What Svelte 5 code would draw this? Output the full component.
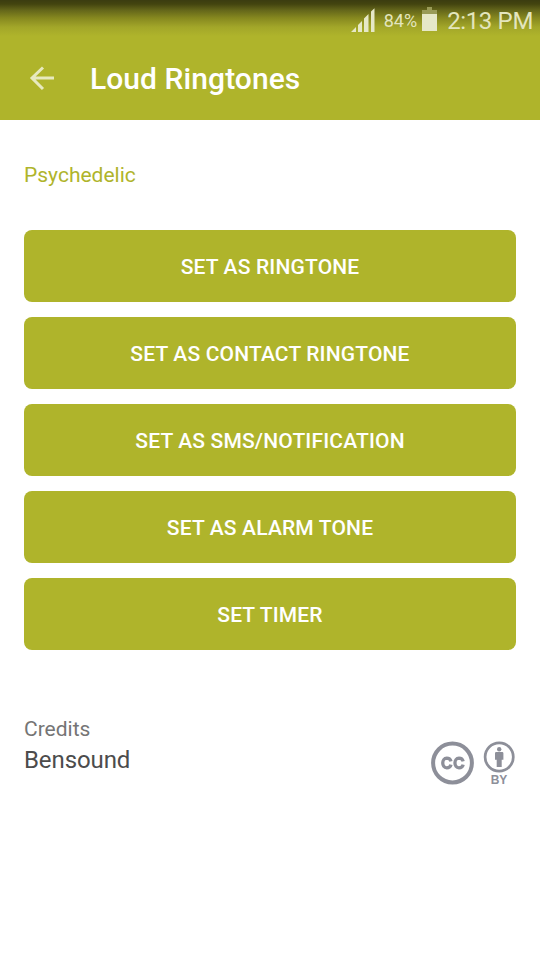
<script lang="ts">
  const actions = [
    'Set as ringtone',
    'Set as contact ringtone',
    'Set as SMS/Notification',
    'Set as alarm tone',
    'Set timer',
  ];

  let selected = $state('');
</script>

<div class="screen">
  <header class="top">
    <div class="status-bar">
      <svg class="signal" width="24" height="24" viewBox="0 0 24 24">
        <path d="M0 24L5 19V24ZM7 17L11 13V24H7ZM13 10.5L17.5 6V24H13ZM20 3.5L23.5 0.3V24H20Z" />
      </svg>
      <span class="percent">84%</span>
      <svg class="battery" width="15" height="24" viewBox="0 0 15 24">
        <path class="battery-empty" d="M5 0H10V3H15V7H0V3H5Z" />
        <path d="M0 7H15V24H0Z" />
      </svg>
      <span class="clock">2:13 PM</span>
    </div>
    <div class="toolbar">
      <button class="back" aria-label="Back">
        <svg width="26" height="26" viewBox="0 0 26 26">
          <path d="M14 1.5L3 12L14 23M3 12H25" />
        </svg>
      </button>
      <h1 class="title">Loud Ringtones</h1>
    </div>
  </header>

  <main class="content">
    <h2 class="tone-name">Psychedelic</h2>

    <div class="actions">
      {#each actions as action}
        <button class="btn" onclick={() => (selected = action)}>{action}</button>
      {/each}
    </div>

    <footer class="credits">
      <div>
        <p class="credits-label">Credits</p>
        <p class="credits-name">Bensound</p>
      </div>
      <div class="license">
        <svg width="44" height="44" viewBox="0 0 44 44">
          <circle cx="22.5" cy="22" r="19.4" fill="none" stroke="currentColor" stroke-width="4" />
          <g fill="none" stroke="currentColor" stroke-width="3.3">
            <path d="M21 20.4C20.2 17.6 18 17.2 16.8 17.2C11.4 17.4 11.4 26.6 16.8 26.8C18.6 26.8 20.4 26 21 23.6" />
            <path d="M33.2 20.4C32.4 17.6 30.2 17.2 29 17.2C23.6 17.4 23.6 26.6 29 26.8C30.8 26.8 32.6 26 33.2 23.6" />
          </g>
        </svg>
        <div class="by">
          <svg width="32" height="32" viewBox="0 0 32 32">
            <circle cx="16.2" cy="16" r="14.1" fill="none" stroke="currentColor" stroke-width="2.7" />
            <circle cx="16.2" cy="8.2" r="2.2" fill="currentColor" />
            <path d="M13.2 11H19.2Q20.4 11 20.4 12.2V18.8H18.7V26H13.7V18.8H12V12.2Q12 11 13.2 11Z" fill="currentColor" />
          </svg>
          <span>BY</span>
        </div>
      </div>
    </footer>
  </main>
</div>

<style>
  :global(body) { margin: 0; background: #fff; }
  .screen { width: 540px; height: 960px; overflow: hidden; background: #fff; font-family: Roboto, sans-serif; }
  .top { height: 120px; background: linear-gradient(#3b3c10 0, #43440f 4px, #63651a 10px, #86881f 18px, #a2a629 27px, #afb42b 36px); }
  .status-bar { display: flex; height: 38px; box-sizing: border-box; padding: 2px 7px 0 0; align-items: center; justify-content: flex-end; color: #e3e5bd; fill: #e6e8c8; }
  .signal { margin-right: 9px; }
  .percent { margin-right: 5px; padding-top: 2px; font-size: 18px; line-height: 24px; }
  .battery { margin-right: 10px; margin-bottom: 2px; }
  .battery-empty { fill: #999b57; }
  .clock { padding-top: 2px; font-size: 24px; line-height: 34px; letter-spacing: -0.35px; }
  .toolbar { display: flex; align-items: center; height: 82px; padding-left: 29px; }
  .back { display: flex; width: 61px; padding: 0; border: none; background: none; cursor: pointer; }
  .back path { fill: none; stroke: #e7e9bf; stroke-width: 3; }
  .title { margin: 0; color: #fff; font-size: 30px; font-weight: 500; line-height: 36px; letter-spacing: 0.07px; }
  .content { padding: 40px 24px 0; }
  .tone-name { margin: 0 0 40px; color: #afb42b; font-size: 21px; font-weight: 400; line-height: 30px; }
  .actions { display: flex; flex-direction: column; gap: 15px; }
  .btn { height: 72px; padding: 2px 0 0; border: none; border-radius: 8px; background: #afb42b; color: #fff; font-family: inherit; font-size: 21px; font-weight: 500; text-transform: uppercase; letter-spacing: 0.16px; cursor: pointer; }
  .credits { display: flex; justify-content: space-between; margin-top: 64px; }
  .credits p { margin: 0; }
  .credits-label { color: #757575; font-size: 21px; line-height: 30px; }
  .credits-name { color: #4c4c4c; font-size: 24px; line-height: 32px; letter-spacing: -0.1px; }
  .license { display: flex; gap: 9px; margin-right: 1px; padding-top: 27px; color: #8d8f99; }
  .by { display: flex; flex-direction: column; align-items: center; font-family: "Liberation Sans", sans-serif; font-size: 12px; font-weight: 700; line-height: 14px; }
</style>
